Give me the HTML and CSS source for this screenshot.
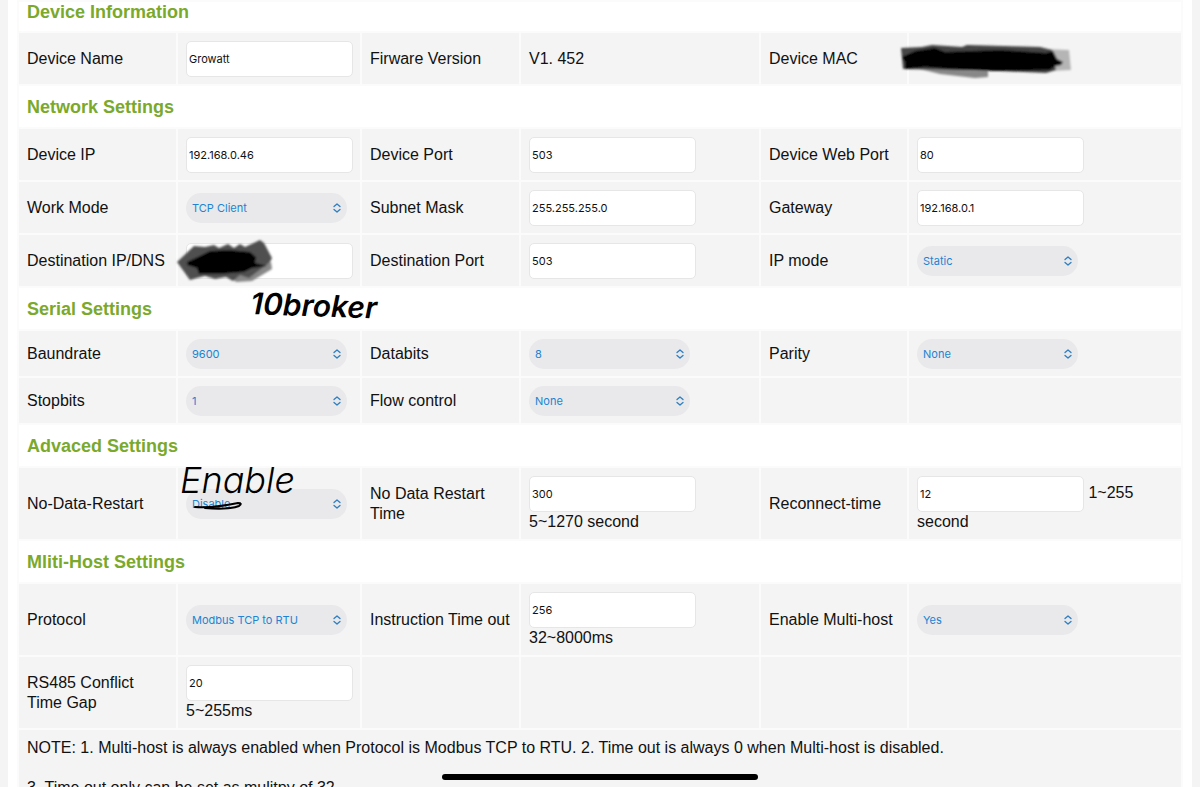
FILE: index.html
```html
<!DOCTYPE html>
<html lang="en">

<head>
    <meta charset="UTF-8">
    <meta name="viewport" content="width=device-width, initial-scale=1.0">
    <title>Device Settings</title>
    <link rel="stylesheet" href="styles.css">
</head>

<body>
    <!-- up/down arrows shared by all the drop-downs -->
    <svg class="defs" width="0" height="0" aria-hidden="true">
        <symbol id="arrows" viewBox="0 0 8 10">
            <path d="M1 3.6 L4 1 L7 3.6 M1 6.4 L4 9 L7 6.4" fill="none" stroke="#2f7fc0" stroke-width="1.3" stroke-linecap="round" stroke-linejoin="round"/>
        </symbol>
    </svg>

    <form class="page">
        <table class="settings">
            <colgroup>
                <col class="c1">
                <col class="c2">
                <col class="c3">
                <col class="c4">
                <col class="c5">
                <col>
            </colgroup>

            <!-- Device Information -->
            <tr class="title first"><th colspan="6">Device Information</th></tr>
            <tr>
                <td><label for="name">Device Name</label></td>
                <td><input type="text" id="name" value="Growatt"></td>
                <td>Firware Version</td>
                <td>V1. 452</td>
                <td>Device MAC</td>
                <td></td>
            </tr>

            <!-- Network Settings -->
            <tr class="title"><th colspan="6">Network Settings</th></tr>
            <tr>
                <td><label for="ip">Device IP</label></td>
                <td><input type="text" id="ip" value="192.168.0.46"></td>
                <td><label for="port">Device Port</label></td>
                <td><input type="text" id="port" value="503"></td>
                <td><label for="webport">Device Web Port</label></td>
                <td><input type="text" id="webport" value="80"></td>
            </tr>
            <tr>
                <td><label for="mode">Work Mode</label></td>
                <td><span class="select"><select id="mode"><option>TCP Client</option></select><svg><use href="#arrows"/></svg></span></td>
                <td><label for="mask">Subnet Mask</label></td>
                <td><input type="text" id="mask" value="255.255.255.0"></td>
                <td><label for="gateway">Gateway</label></td>
                <td><input type="text" id="gateway" value="192.168.0.1"></td>
            </tr>
            <tr>
                <td><label for="dest">Destination IP/DNS</label></td>
                <td><input type="text" id="dest"></td>
                <td><label for="destport">Destination Port</label></td>
                <td><input type="text" id="destport" value="503"></td>
                <td><label for="ipmode">IP mode</label></td>
                <td><span class="select"><select id="ipmode"><option>Static</option></select><svg><use href="#arrows"/></svg></span></td>
            </tr>

            <!-- Serial Settings -->
            <tr class="title"><th colspan="6">Serial Settings</th></tr>
            <tr class="short">
                <td><label for="baud">Baundrate</label></td>
                <td><span class="select"><select id="baud"><option>9600</option></select><svg><use href="#arrows"/></svg></span></td>
                <td><label for="databits">Databits</label></td>
                <td><span class="select"><select id="databits"><option>8</option></select><svg><use href="#arrows"/></svg></span></td>
                <td><label for="parity">Parity</label></td>
                <td><span class="select"><select id="parity"><option>None</option></select><svg><use href="#arrows"/></svg></span></td>
            </tr>
            <tr class="short">
                <td><label for="stopbits">Stopbits</label></td>
                <td><span class="select"><select id="stopbits"><option>1</option></select><svg><use href="#arrows"/></svg></span></td>
                <td><label for="flow">Flow control</label></td>
                <td><span class="select"><select id="flow"><option>None</option></select><svg><use href="#arrows"/></svg></span></td>
                <td></td>
                <td></td>
            </tr>

            <!-- Advaced Settings -->
            <tr class="title"><th colspan="6">Advaced Settings</th></tr>
            <tr class="tall">
                <td><label for="nodata">No-Data-Restart</label></td>
                <td><span class="select"><select id="nodata"><option>Disable</option></select><svg><use href="#arrows"/></svg></span></td>
                <td><label for="nodatatime">No Data Restart Time</label></td>
                <td><input type="text" id="nodatatime" value="300"><br>5~1270 second</td>
                <td><label for="reconnect">Reconnect-time</label></td>
                <td><input type="text" id="reconnect" value="12"> 1~255<br>second</td>
            </tr>

            <!-- Mliti-Host Settings -->
            <tr class="title"><th colspan="6">Mliti-Host Settings</th></tr>
            <tr class="tall">
                <td><label for="protocol">Protocol</label></td>
                <td><span class="select"><select id="protocol"><option>Modbus TCP to RTU</option></select><svg><use href="#arrows"/></svg></span></td>
                <td><label for="timeout">Instruction Time out</label></td>
                <td><input type="text" id="timeout" value="256"><br>32~8000ms</td>
                <td><label for="multihost">Enable Multi-host</label></td>
                <td><span class="select"><select id="multihost"><option>Yes</option></select><svg><use href="#arrows"/></svg></span></td>
            </tr>
            <tr class="tall">
                <td><label for="gap">RS485 Conflict Time Gap</label></td>
                <td><input type="text" id="gap" value="20"><br>5~255ms</td>
                <td></td>
                <td></td>
                <td></td>
                <td></td>
            </tr>
            <tr class="note">
                <td colspan="6">NOTE: 1. Multi-host is always enabled when Protocol is Modbus TCP to RTU. 2. Time out is always 0 when Multi-host is disabled.<br><br>3. Time out only can be set as mulitpy of 32.</td>
            </tr>
        </table>
    </form>

    <!-- pen marks over the form -->
    <svg class="ink" viewBox="0 0 1200 787">
        <defs>
            <filter id="soft" x="-10%" y="-20%" width="120%" height="140%"><feGaussianBlur stdDeviation="1"/></filter>
        </defs>
        <!-- MAC address -->
        <g filter="url(#soft)">
            <path d="M1045 49 L1069 50 L1071 70 L1050 71 Z" fill="#b5b5b5"/>
            <path d="M920 69 L988 71 L988 77 L975 78 L940 74 Z" fill="#888"/>
            <path d="M901 48 L922 47 L932 45 L962 47 L967 45 L1040 47 L1052 50 L1056 70 L1046 73 L1000 71 L950 70 L903 69 Z" fill="#444"/>
            <path d="M902 57 L915 51 L935 48 L945 52 L1000 50 L1046 53 L1053 51 L1057 59 L1063 62 L1061 65 L1055 66 L1050 70 L1000 71 L950 69 L925 67 L905 69 L905 62 Z" fill="#000"/>
        </g>
        <!-- destination address -->
        <g filter="url(#soft)">
            <path d="M248 270 L271 262 L272 269 L252 281 L236 282 L231 277 Z" fill="#888"/>
            <path d="M177 262 L194 246 L205 247 L214 245 L219 248 L228 244 L234 248 L240 244 L245 247 L260 240 L264 243 L272 258 L270 262 L249 278 L240 275 L233 281 L226 277 L215 279 L205 276 L197 278 L190 280 Z" fill="#505050"/>
            <path d="M187 262 L202 255 L210 251 L229 250 L250 252 L256 257 L255 263 L267 266 L252 268 L244 272 L220 274 L199 274 L197 268 L187 265 Z" fill="#000"/>
        </g>
        <text class="pen bold" x="250" y="314" transform="rotate(2 250 314)">10broker</text>
        <text class="pen" x="180" y="493">Enable</text>
        <path d="M195 507 Q215 508 238 503 Q243 503 239 506 Q228 510 205 508" fill="none" stroke="#000" stroke-width="2" stroke-linecap="round" stroke-linejoin="round"/>
    </svg>

    <div class="home-bar"></div>
</body>

</html>
```
FILE: styles.css
```css
* {
    box-sizing: border-box;
}

body {
    margin: 0;
    padding: 0 8px;
    background-color: #f4f4f4;
    font-family: "Liberation Sans", Arial, sans-serif;
    font-size: 16px;
    line-height: 20px;
    color: #111;
    overflow: hidden;
}

.defs {
    position: absolute;
}

.page {
    padding: 0 9px;
    background-color: white;
}

.settings {
    width: 100%;
    table-layout: fixed;
    border-spacing: 2px;
    background-color: #fbfbfb;
}

.c1,
.c3 {
    width: 157px;
}

.c2 {
    width: 182px;
}

.c4 {
    width: 238px;
}

.c5 {
    width: 146px;
}

/* section titles */
.title th {
    height: 41px;
    padding: 0 8px;
    background-color: white;
    color: #7aa92b;
    font-size: 18px;
    text-align: left;
}

.title.first th {
    height: 29px;
    vertical-align: top;
}

td {
    height: 51px;
    padding: 0 8px;
    background-color: #f4f4f4;
    vertical-align: middle;
}

.short td {
    height: 45px;
}

.tall td {
    height: 71px;
}

.note td {
    height: 100px;
    padding-top: 8px;
    vertical-align: top;
}

input {
    width: 167px;
    height: 36px;
    padding: 0 2px;
    border: 1px solid #e6e6e6;
    border-radius: 5px;
    background-color: white;
    color: #111;
    font-family: Inter, sans-serif;
    font-size: 11px;
    vertical-align: middle;
}

.select {
    display: inline-block;
    position: relative;
    width: 161px;
    height: 30px;
    vertical-align: middle;
}

.select select {
    appearance: none;
    width: 100%;
    height: 30px;
    padding: 0 6px;
    border: none;
    border-radius: 15px;
    background-color: #e9e9eb;
    color: #2084d2;
    font-family: Inter, sans-serif;
    font-size: 11px;
}

.select svg {
    position: absolute;
    top: 10px;
    right: 6px;
    width: 8px;
    height: 10px;
    pointer-events: none;
}

.ink {
    position: absolute;
    top: 0;
    left: 0;
    width: 1200px;
    height: 787px;
    pointer-events: none;
}

.pen {
    font-family: Inter, cursive;
    font-size: 36px;
    font-style: italic;
    font-weight: 300;
    fill: black;
}

.pen.bold {
    font-size: 30px;
    font-weight: 600;
}

.home-bar {
    position: fixed;
    bottom: 7px;
    left: 50%;
    width: 316px;
    height: 6px;
    margin-left: -158px;
    border-radius: 3px;
    background-color: black;
}
```
